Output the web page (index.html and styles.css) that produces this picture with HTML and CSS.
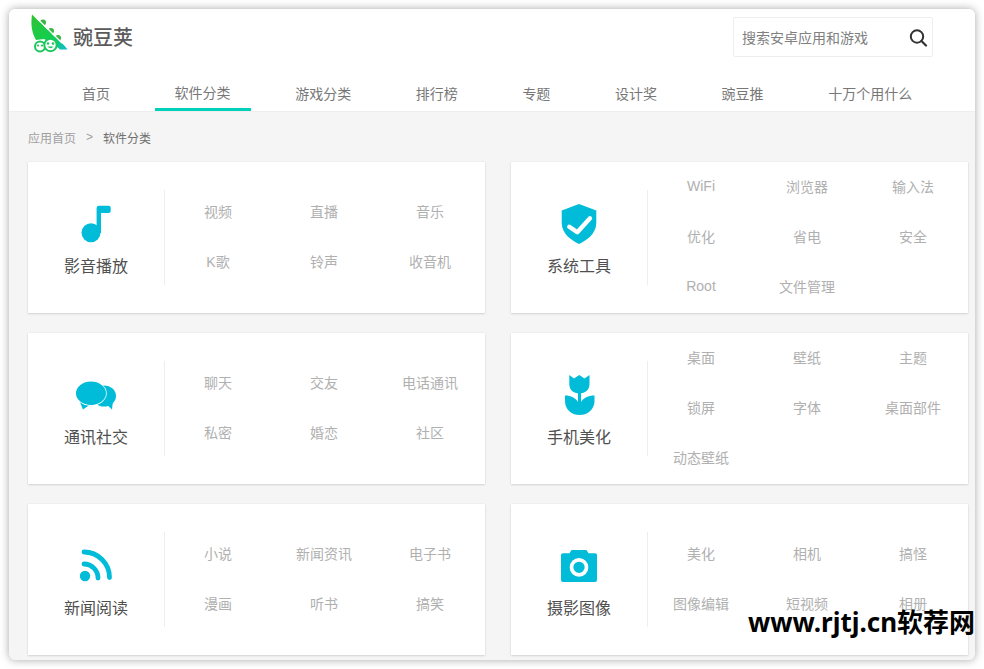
FILE: index.html
```html
<!DOCTYPE html>
<html lang="zh-CN">
<head>
  <meta charset="UTF-8" />
  <title>软件分类</title>
  <link rel="stylesheet" href="styles.css">
</head>
<body>

  <div class="window">

    <div class="header">
      <div class="top">
        <a class="logo">
          <svg class="logo-mark" width="40" height="40" viewBox="0 0 40 40">
            <defs>
              <linearGradient id="pod" x1="0" y1="0" x2="1" y2="1">
                <stop offset="0" stop-color="#2fc234"/>
                <stop offset="0.65" stop-color="#0fd053"/>
                <stop offset="1" stop-color="#12b8d8"/>
              </linearGradient>
            </defs>
            <circle cx="13" cy="9.5" r="3" fill="#3ab54a"/>
            <circle cx="21" cy="18" r="3" fill="#3ab54a"/>
            <circle cx="28" cy="25" r="3" fill="#3ab54a"/>
            <path d="M2 1.5 C0.5 12 2 20 6 27 L14 26 L24 31 L30 36.5 L37.5 36.5 C35 33 33 31 31 29.5 C22 21 12 11 2 1.5 Z" fill="url(#pod)"/>
            <path d="M7 5.5 C15 13 23 21 32 30" stroke="#fff" stroke-width="1.3" fill="none"/>
            <circle cx="10" cy="33.5" r="5" fill="#fff" stroke="#19c75b" stroke-width="2"/>
            <circle cx="20.5" cy="32" r="6.2" fill="#fff" stroke="#19c75b" stroke-width="2"/>
            <circle cx="8" cy="32.5" r="1.1" fill="#19c75b"/>
            <circle cx="12" cy="32.5" r="1.1" fill="#19c75b"/>
            <circle cx="18" cy="30.5" r="1.3" fill="#19c75b"/>
            <circle cx="23" cy="30.5" r="1.3" fill="#19c75b"/>
            <path d="M17.5 33.5 Q20.5 37 23.5 33.5 Z" fill="#19c75b"/>
          </svg>
          <span class="logo-text">豌豆荚</span>
        </a>
        <div class="search">
          <span class="search-hint">搜索安卓应用和游戏</span>
          <svg width="20" height="20" viewBox="0 0 20 20">
            <circle cx="9" cy="9.5" r="6.2" fill="none" stroke="#333" stroke-width="2"/>
            <path d="M13.5 14 L18 18.5" stroke="#333" stroke-width="2.2" stroke-linecap="round"/>
          </svg>
        </div>
      </div>
      <div class="nav">
        <a class="nav-item">首页</a>
        <a class="nav-item active">软件分类</a>
        <a class="nav-item">游戏分类</a>
        <a class="nav-item">排行榜</a>
        <a class="nav-item">专题</a>
        <a class="nav-item">设计奖</a>
        <a class="nav-item">豌豆推</a>
        <a class="nav-item">十万个用什么</a>
      </div>
    </div>

    <div class="main">
      <div class="crumbs">
        <span>应用首页</span>
        <span class="sep">&gt;</span>
        <span class="current">软件分类</span>
      </div>

      <div class="cards">

        <div class="card">
          <div class="card-head">
            <svg class="card-icon" viewBox="0 0 40 40">
              <circle cx="15" cy="29.7" r="9.5"/>
              <path d="M20.6 30 V5 a2.3 2.3 0 0 1 2.3-2.3 H32.7 a2 2 0 0 1 2 2 V8 a2 2 0 0 1-2 2 H25 V30 Z"/>
            </svg>
            <div class="card-title">影音播放</div>
          </div>
          <div class="tags">
            <a>视频</a><a>直播</a><a>音乐</a>
            <a>K歌</a><a>铃声</a><a>收音机</a>
          </div>
        </div>

        <div class="card">
          <div class="card-head">
            <svg class="card-icon" viewBox="0 0 40 40">
              <path d="M20 1 L37.3 7.5 V20 C37 31 28 37 20 41 C12 37 3 31 2.7 20 V7.5 Z"/>
              <path class="cut" d="M10.3 23.7 L18.3 29.3 L31 15.3"/>
            </svg>
            <div class="card-title">系统工具</div>
          </div>
          <div class="tags">
            <a>WiFi</a><a>浏览器</a><a>输入法</a>
            <a>优化</a><a>省电</a><a>安全</a>
            <a>Root</a><a>文件管理</a>
          </div>
        </div>

        <div class="card">
          <div class="card-head">
            <svg class="card-icon" viewBox="0 0 40 40">
              <ellipse cx="28" cy="22" rx="12" ry="10.5"/>
              <path d="M30 30 L36 35.5 L37 26 Z"/>
              <path d="M3 26 L7 35.5 L15 30 Z"/>
              <ellipse class="bubble" cx="15" cy="19.3" rx="15" ry="11.7"/>
            </svg>
            <div class="card-title">通讯社交</div>
          </div>
          <div class="tags">
            <a>聊天</a><a>交友</a><a>电话通讯</a>
            <a>私密</a><a>婚恋</a><a>社区</a>
          </div>
        </div>

        <div class="card">
          <div class="card-head">
            <svg class="card-icon" viewBox="0 0 40 40">
              <path d="M10.3 1 L15 4.5 L20.3 1 L25.5 4.5 L30.5 1 V10 C30.5 16 26 19.5 20.3 19.5 C14.5 19.5 10.3 16 10.3 10 Z"/>
              <path d="M6 21.5 C12 21.5 16.5 24 19 28 V19 H22 V28 C24.5 24 29 21.5 35.5 21.5 V27 C35.5 35 29 41 20.7 41 C12 41 6 35 6 27 Z"/>
            </svg>
            <div class="card-title">手机美化</div>
          </div>
          <div class="tags">
            <a>桌面</a><a>壁纸</a><a>主题</a>
            <a>锁屏</a><a>字体</a><a>桌面部件</a>
            <a>动态壁纸</a>
          </div>
        </div>

        <div class="card">
          <div class="card-head">
            <svg class="card-icon" viewBox="0 0 40 40">
              <circle cx="9" cy="31" r="5.2"/>
              <path class="arc" d="M8 19 A14 14 0 0 1 22 33"/>
              <path class="arc" d="M8 7 A25.5 25.5 0 0 1 33.5 32.5"/>
            </svg>
            <div class="card-title">新闻阅读</div>
          </div>
          <div class="tags">
            <a>小说</a><a>新闻资讯</a><a>电子书</a>
            <a>漫画</a><a>听书</a><a>搞笑</a>
          </div>
        </div>

        <div class="card">
          <div class="card-head">
            <svg class="card-icon" viewBox="0 0 40 40">
              <path d="M4 8.3 H10.5 L12.5 5 H27.5 L29.5 8.3 H36 a2 2 0 0 1 2 2 V35 a2 2 0 0 1-2 2 H4 a2 2 0 0 1-2-2 V10.3 a2 2 0 0 1 2-2 Z"/>
              <circle class="lens" cx="20" cy="22.3" r="7.5"/>
            </svg>
            <div class="card-title">摄影图像</div>
          </div>
          <div class="tags">
            <a>美化</a><a>相机</a><a>搞怪</a>
            <a>图像编辑</a><a>短视频</a><a>相册</a>
          </div>
        </div>

      </div>
    </div>
  </div>

  <div class="stamp">www.rjtj.cn软荐网</div>

</body>
</html>
```

FILE: styles.css
```css
* {
  margin: 0;
  padding: 0;
  box-sizing: border-box;
}

html, body {
  height: 100%;
  overflow: hidden;
  background: #fff;
  font-family: "Liberation Sans", "Noto Sans CJK SC", sans-serif;
}

.window {
  width: 966px;
  height: 651px;
  margin: 9px 0 0 9px;
  border-radius: 6px;
  overflow: hidden;
  background: #f5f5f5;
  box-shadow: 0 0 8px rgba(0, 0, 0, 0.35);
}

.header {
  height: 103px;
  background: #fff;
  border-bottom: 1px solid #eee;
}

.top {
  height: 62px;
  display: flex;
  justify-content: space-between;
  padding: 4px 42px 0 21px;
}

.logo {
  display: flex;
  align-items: flex-start;
}

.logo-text {
  margin: 13px 0 0 3px;
  font-size: 20px;
  line-height: 24px;
  font-weight: 500;
  color: #5a5a5a;
}

.search {
  width: 200px;
  height: 40px;
  margin-top: 4px;
  padding: 0 4px 0 8px;
  display: flex;
  align-items: center;
  justify-content: space-between;
  border: 1px solid #eee;
  border-radius: 2px;
}

.search-hint {
  font-size: 14px;
  color: #808080;
}

.nav {
  display: flex;
  gap: 24.6px;
  padding-left: 53px;
}

.nav-item {
  height: 40px;
  padding: 10px 20px 0;
  font-size: 14px;
  line-height: 26px;
  color: #777;
}

.nav-item.active {
  padding-top: 9px;
  border-bottom: 3px solid #00d1b9;
}

.main {
  padding: 0 7px 0 19px;
}

.crumbs {
  height: 50px;
  display: flex;
  align-items: center;
  font-size: 12px;
  color: #a0a0a0;
}

.sep {
  margin: 0 10px;
}

.current {
  color: #707070;
}

.cards {
  display: grid;
  grid-template-columns: 457px 457px;
  grid-auto-rows: 151px;
  gap: 20px 26px;
}

.card {
  display: flex;
  align-items: center;
  background: #fff;
  box-shadow: 0 0 1px rgba(0, 0, 0, 0.12), 0 1px 2px rgba(0, 0, 0, 0.12);
}

.card-head {
  width: 137px;
  height: 95px;
  padding-top: 13px;
  flex-shrink: 0;
  display: flex;
  flex-direction: column;
  align-items: center;
  border-right: 1px solid #eee;
}

.card-icon {
  width: 40px;
  height: 40px;
  overflow: visible;
  fill: #00bcd8;
}

.card-icon .cut {
  fill: none;
  stroke: #fff;
  stroke-width: 4.4;
  stroke-linecap: round;
  stroke-linejoin: round;
}

.card-icon .bubble {
  stroke: #fff;
  stroke-width: 1.5;
  paint-order: stroke;
}

.card-icon .arc {
  fill: none;
  stroke: #00bcd8;
  stroke-width: 4.8;
  stroke-linecap: round;
}

.card-icon .lens {
  stroke: #fff;
  stroke-width: 3.7;
}

.card-title {
  margin-top: 12px;
  font-size: 16px;
  line-height: 24px;
  color: #505050;
}

.tags {
  flex: 1;
  padding: 0 2px 4px 0;
  display: grid;
  grid-template-columns: repeat(3, 1fr);
  grid-auto-rows: 50px;
  align-items: center;
  justify-items: center;
  font-size: 14px;
  color: #b0b0b0;
}

.stamp {
  position: absolute;
  left: 748px;
  top: 604px;
  font-family: "Noto Sans", "Noto Sans CJK SC", sans-serif;
  font-size: 26px;
  line-height: 36px;
  font-weight: 700;
  color: #000;
  white-space: nowrap;
}
```
